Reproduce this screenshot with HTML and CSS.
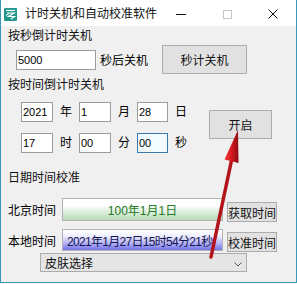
FILE: index.html
```html
<!DOCTYPE html>
<html lang="zh-CN">
<head>
<meta charset="utf-8">
<title>计时关机和自动校准软件</title>
<link rel="stylesheet" href="styles.css">
</head>
<body>
<div class="window">
  <div class="titlebar">
    <svg class="appicon" viewBox="0 0 13 13" width="13" height="13">
      <rect x="0" y="0" width="13" height="13" rx="1" fill="#23998d"/>
      <path d="M2 2.5H11" stroke="#fff" stroke-width="1.2" fill="none"/>
      <path d="M3 5H10L4.5 8.5H10.5L7 11" stroke="#fff" stroke-width="1.2" fill="none"/>
      <path d="M2 7.5L5 5.5" stroke="#fff" stroke-width="1" fill="none"/>
    </svg>
    <span class="title">计时关机和自动校准软件</span>
    <div class="controls">
      <div class="ctl"><span class="min"></span></div>
      <div class="ctl"><span class="max"></span></div>
      <div class="ctl">
        <svg width="10" height="10" viewBox="0 0 10 10"><path d="M0.5 0.5L9.5 9.5M9.5 0.5L0.5 9.5" stroke="#111" stroke-width="1" fill="none"/></svg>
      </div>
    </div>
  </div>
  <div class="content">
    <div class="sec">按秒倒计时关机</div>
    <div class="row1">
      <div class="tb w80">5000</div>
      <span class="lbl after">秒后关机</span>
      <div class="btn b1">秒计关机</div>
    </div>
    <div class="sec s2">按时间倒计时关机</div>
    <div class="timebox">
      <div class="tgrid">
        <div class="tb">2021</div><div class="u">年</div>
        <div class="tb">1</div><div class="u">月</div>
        <div class="tb">28</div><div class="u">日</div>
        <div class="tb">17</div><div class="u">时</div>
        <div class="tb">00</div><div class="u">分</div>
        <div class="tb focus">00</div><div class="u">秒</div>
      </div>
      <div class="btn start">开启</div>
    </div>
    <div class="sec s3">日期时间校准</div>
    <div class="trow r1">
      <span class="lbl">北京时间</span>
      <div class="field green">100年1月1日</div>
      <div class="btn small">获取时间</div>
    </div>
    <div class="trow r2">
      <span class="lbl">本地时间</span>
      <div class="field blue">2021年1月27日15时54分21秒</div>
      <div class="btn small">校准时间</div>
    </div>
    <div class="combo">
      <span>皮肤选择</span>
      <svg class="chev" width="8" height="5" viewBox="0 0 8 5"><path d="M0.5 0.5L4 4L7.5 0.5" stroke="#555" stroke-width="1" fill="none"/></svg>
    </div>
  </div>
</div>
<svg class="arrow" width="297" height="284" viewBox="0 0 297 284">
  <defs>
    <linearGradient id="hg" x1="0" y1="0" x2="1" y2="0">
      <stop offset="0" stop-color="#f03a3a"/>
      <stop offset="0.5" stop-color="#d41a20"/>
      <stop offset="1" stop-color="#8e0c12"/>
    </linearGradient>
  </defs>
  <path d="M211 257L231.6 160" stroke="#b3141b" stroke-width="3.5" stroke-linecap="round" fill="none"/>
  <polygon points="238,130 238.5,163 224.5,159.5" fill="url(#hg)"/>
</svg>
</body>
</html>
```

FILE: styles.css
```css
* {
  box-sizing: border-box;
  margin: 0;
  padding: 0;
}

html, body {
  width: 297px;
  height: 284px;
  overflow: hidden;
}

body {
  position: relative;
  background: #ffffff;
  font-family: "Liberation Sans", "Noto Sans CJK SC", sans-serif;
  font-size: 12px;
  color: #000;
}

.window {
  width: 297px;
  height: 283px;
  background: #f0f0f0;
  border: 1px solid #3d98b8;
  border-top: none;
}

.titlebar {
  height: 26px;
  background: #ffffff;
  display: flex;
  align-items: center;
  padding-top: 2px;
}

.appicon {
  margin-left: 3px;
  flex: none;
}

.title {
  margin-left: 8px;
  font-size: 12px;
  color: #111;
  line-height: 16px;
}

.controls {
  margin-left: auto;
  display: flex;
  height: 100%;
}

.ctl {
  width: 46px;
  display: flex;
  align-items: center;
  justify-content: center;
}

.min {
  width: 10px;
  height: 1px;
  background: #111;
}

.max {
  width: 9px;
  height: 9px;
  border: 1px solid #c6c6c6;
}

.content {
  padding: 2px 0 0 7px;
}

.sec {
  line-height: 16px;
  height: 16px;
  color: #111;
}

.s2 {
  margin-top: 3px;
}

.s3 {
  margin-top: 17px;
}

.tb {
  background: #ffffff;
  border: 1px solid #9c9c9c;
  height: 20px;
  padding-left: 1px;
  font-size: 11px;
  line-height: 18px;
  color: #000;
}

.tb.focus {
  border-color: #3a78b0;
  background: #f2fbff;
}

.btn {
  background: #e1e1e1;
  border: 1px solid #adadad;
  display: flex;
  align-items: center;
  justify-content: center;
  color: #111;
}

.row1 {
  margin-top: 1px;
  display: flex;
  align-items: center;
  height: 29px;
}

.w80 {
  width: 80px;
  margin-left: 8px;
  padding-left: 1px;
}

.after {
  margin-left: 4px;
}

.b1 {
  margin-left: 14px;
  width: 85px;
  height: 29px;
}

.timebox {
  margin-top: 9px;
  display: flex;
  align-items: flex-start;
}

.tgrid {
  margin-left: 13px;
  display: grid;
  grid-template-columns: 32px 26px 32px 26px 31px 26px;
  grid-template-rows: 20px 20px;
  row-gap: 11px;
}

.u {
  text-align: center;
  line-height: 20px;
}

.start {
  margin-left: 15px;
  margin-top: 8px;
  width: 63px;
  height: 29px;
}

.trow {
  display: flex;
  align-items: flex-end;
}

.trow .lbl {
  align-self: center;
  width: 48px;
}

.r1 {
  margin-top: 12px;
  height: 23px;
}

.r2 {
  margin-top: 8px;
  height: 22px;
}

.field {
  margin-left: 6px;
  width: 161px;
  height: 100%;
  border: 1px solid #b2b2b2;
  display: flex;
  align-items: center;
}

.green {
  justify-content: center;
  color: #257a25;
  background: linear-gradient(#ffffff 0%, #ffffff 30%, #e4f2e4 55%, #b6d9b6 100%);
}

.blue {
  padding-left: 4px;
  color: #141450;
  letter-spacing: -0.7px;
  white-space: nowrap;
  overflow: hidden;
  background: linear-gradient(#ffffff 0%, #f0f0ff 30%, #b4b4f6 65%, #7272ea 100%);
}

.small {
  margin-left: 4px;
  width: 50px;
  height: 20px;
  margin-bottom: -1px;
}

.combo {
  margin-top: 2px;
  margin-left: 32px;
  width: 207px;
  height: 19px;
  background: #e5e5e5;
  border: 1px solid #acacac;
  display: flex;
  align-items: center;
  padding-left: 4px;
  color: #111;
}

.chev {
  margin-left: auto;
  margin-right: 4px;
  margin-top: 3px;
}

.arrow {
  position: absolute;
  left: 0;
  top: 0;
  pointer-events: none;
}
```
